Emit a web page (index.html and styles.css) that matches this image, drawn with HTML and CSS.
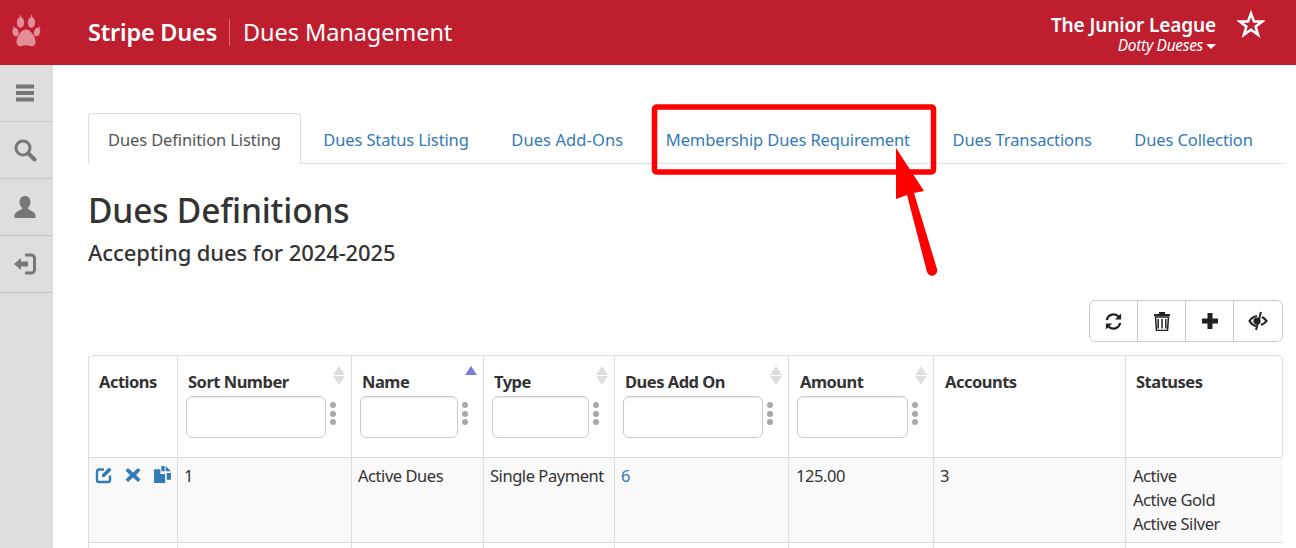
FILE: index.html
```html
<!DOCTYPE html>
<html lang="en">
<head>
<meta charset="utf-8">
<title>Dues Definitions</title>
<link rel="stylesheet" href="styles.css">
</head>
<body>
<header class="topbar">
  <div class="logo-cell">
    <svg class="paw" viewBox="0 0 30 36" width="30" height="36"><g fill="#e38d99"><ellipse cx="8.500" cy="9.500" rx="3.600" ry="5.200"/><ellipse cx="19.500" cy="9.500" rx="3.600" ry="5.200"/><ellipse cx="3.500" cy="19" rx="3" ry="4.400" transform="rotate(-15 3.500 19)"/><ellipse cx="25" cy="19" rx="3" ry="4.400" transform="rotate(15 25 19)"/><path d="M14 16.500c5 0 9.500 7.500 9.500 12.500 0 4-3 5-5 4-2.800-1-6-1-8.800 0-2 1-5.200 0-5.200-4 0-5 4.500-12.500 9.500-12.500z"/><path d="M7.500 4.500l1-3.500 1 3.500zM18.500 4.500l1-3.500 1 3.500zM26.500 15l1-2.500 .5 2.500zM1 15l.5-2.500 1 2.500z"/></g></svg>
  </div>
  <div class="brand">Stripe Dues</div>
  <div class="module">Dues Management</div>
  <div class="account">
    <div class="org">The Junior League</div>
    <div class="user">Dotty Dueses<span class="caret"></span></div>
  </div>
  <svg class="star" viewBox="0 0 28 28" width="28" height="28"><path d="M14 3.500l3 8h8.300l-6.700 5.100 2.500 8.200-7.100-5-7.100 5 2.500-8.200-6.700-5.100h8.300z" fill="none" stroke="#fff" stroke-width="2.600"/></svg>
</header>
<div class="shell">
  <nav class="rail">
    <div class="rail-item"><svg viewBox="0 0 20 20" width="20" height="20"><path d="M1 1.500h18v4H1zM1 8h18v4H1zM1 14.500h18v4H1z" fill="#777"/></svg></div>
    <div class="rail-item"><svg viewBox="0 0 24 24" width="24" height="24"><circle cx="10" cy="10" r="7" fill="none" stroke="#777" stroke-width="3"/><path d="M15 15l6.500 6.500" stroke="#777" stroke-width="4" stroke-linecap="round"/></svg></div>
    <div class="rail-item"><svg viewBox="0 0 24 24" width="24" height="24"><path d="M12 1c3.500 0 5.500 2.800 5.500 6 0 2.600-1.300 4.800-2.800 6 0 2.500 7.800 2.800 7.800 7.500V23H1.500v-2.500C1.500 15.800 9.300 15.500 9.300 13 7.800 11.800 6.500 9.600 6.500 7c0-3.200 2-6 5.500-6z" fill="#777"/></svg></div>
    <div class="rail-item"><svg viewBox="0 0 24 24" width="24" height="24"><path d="M12 3h6.500A3 3 0 0 1 21.500 6v12a3 3 0 0 1-3 3H12" fill="none" stroke="#777" stroke-width="3"/><path d="M1 12l7-6v3.500h7v5H8V18z" fill="#777"/></svg></div>
  </nav>
  <main class="content">
    <ul class="tabs">
      <li class="tab tab-active">Dues Definition Listing</li>
      <li class="tab"><a href="#">Dues Status Listing</a></li>
      <li class="tab"><a class="wide" href="#">Dues Add-Ons</a></li>
      <li class="tab"><a href="#">Membership Dues Requirement</a></li>
      <li class="tab"><a href="#">Dues Transactions</a></li>
      <li class="tab"><a href="#">Dues Collection</a></li>
    </ul>
    <h1 class="title">Dues Definitions</h1>
    <h2 class="subtitle">Accepting dues for 2024-2025</h2>
    <div class="toolbar">
      <div class="btn-group">
        <button class="tool" type="button" aria-label="Refresh"><svg viewBox="0 0 20 20" width="19" height="19"><path d="M3 8.500A7.200 7.200 0 0 1 15.500 5M17 11.500A7.200 7.200 0 0 1 4.500 15" fill="none" stroke="#222" stroke-width="2.400"/><path d="M18 1.500V8h-6.500zM2 18.500V12h6.500z" fill="#222"/></svg></button>
        <button class="tool" type="button" aria-label="Delete"><svg viewBox="0 0 18 20" width="18" height="20"><path d="M6 1h6v2h5v2H1V3h5z" fill="#222"/><path d="M2.500 6h13l-1 13.500h-11zM5.200 8v9.500M9 8v9.500M12.800 8v9.500" fill="none" stroke="#222" stroke-width="1.500"/></svg></button>
        <button class="tool" type="button" aria-label="Add"><svg viewBox="0 0 18 18" width="18" height="18"><path d="M6.500 1h5v5.500H17v5h-5.500V17h-5v-5.500H1v-5h5.500z" fill="#222"/></svg></button>
        <button class="tool" type="button" aria-label="Toggle columns"><svg viewBox="0 0 20 20" width="20" height="20"><path d="M9 5C5.500 5.500 3 7.500 1.500 10 3 12.500 5.500 14.500 8 15" fill="none" stroke="#222" stroke-width="2.200"/><circle cx="9" cy="10" r="3.600" fill="#222"/><path d="M13 1L8 19" stroke="#222" stroke-width="2"/><path d="M14 6c2 1 3.500 2.500 4.500 4-1 1.500-3 3-5.500 4" fill="none" stroke="#222" stroke-width="2.200"/></svg></button>
      </div>
    </div>
    <div class="table-wrap">
      <table class="grid">
        <colgroup>
          <col class="c-actions"><col class="c-sort"><col class="c-name"><col class="c-type"><col class="c-addon"><col class="c-amount"><col class="c-accounts"><col class="c-statuses">
        </colgroup>
        <thead>
          <tr>
            <th class="plain">Actions</th>
            <th><div class="th-label">Sort Number</div><span class="sort"><i class="up"></i><i class="down"></i></span><div class="filter"><input class="box box-sort" type="text" aria-label="Sort Number filter"><span class="dots"><i></i><i></i><i></i></span></div></th>
            <th><div class="th-label">Name</div><span class="sort"><i class="up on"></i></span><div class="filter"><input class="box box-name" type="text" aria-label="Name filter"><span class="dots"><i></i><i></i><i></i></span></div></th>
            <th><div class="th-label">Type</div><span class="sort"><i class="up"></i><i class="down"></i></span><div class="filter"><input class="box box-type" type="text" aria-label="Type filter"><span class="dots"><i></i><i></i><i></i></span></div></th>
            <th><div class="th-label">Dues Add On</div><span class="sort"><i class="up"></i><i class="down"></i></span><div class="filter"><input class="box box-addon" type="text" aria-label="Dues Add On filter"><span class="dots"><i></i><i></i><i></i></span></div></th>
            <th><div class="th-label th-amount">Amount</div><span class="sort"><i class="up"></i><i class="down"></i></span><div class="filter"><input class="box box-amount" type="text" aria-label="Amount filter"><span class="dots"><i></i><i></i><i></i></span></div></th>
            <th class="plain-wide">Accounts</th>
            <th class="plain-last">Statuses</th>
          </tr>
        </thead>
        <tbody>
          <tr class="row-main">
            <td class="acts">
              <svg class="ic-edit" viewBox="0 0 18 18" width="18" height="18"><path d="M9 3.500H4A2 2 0 0 0 2 5.500v8.500a2 2 0 0 0 2 2h9a2 2 0 0 0 2-2V9.500" fill="none" stroke="#337ab7" stroke-width="2.400"/><path d="M7 8.500L14 1.500l2.500 2.500-7 7H7z" fill="#337ab7"/></svg>
              <svg class="ic-del" viewBox="0 0 16 16" width="16" height="16"><path d="M3 1l5 4.500L13 1l2.500 2.500L11 8l4.500 4.500L13 15l-5-4.500L3 15 .5 12.500 5 8 .5 3.500z" fill="#337ab7"/></svg>
              <svg class="ic-copy" viewBox="0 0 18 18" width="19" height="19"><path d="M1 4h6v4.500h4.500V17H1z" fill="#337ab7"/><path d="M8 1h3v5H8zM12 1l5 5h-5zM13 7.500h4V14h-4z" fill="#337ab7"/></svg>
            </td>
            <td>1</td>
            <td>Active Dues</td>
            <td>Single Payment</td>
            <td><a href="#">6</a></td>
            <td class="td-amount">125.00</td>
            <td>3</td>
            <td class="td-last">Active<br>Active Gold<br>Active Silver</td>
          </tr>
          <tr class="row-next"><td></td><td></td><td></td><td></td><td></td><td></td><td></td><td></td></tr>
        </tbody>
      </table>
    </div>
  </main>
</div>
<svg class="annotation" viewBox="0 0 1296 548" width="1296" height="548">
  <rect x="654.500" y="107" width="279" height="65" rx="2" fill="none" stroke="#fe0000" stroke-width="5.500"/>
  <path d="M896 148V199L907 195 927 272a5 5 0 0 0 10-3L914 193 924 191z" fill="#fe0000"/>
</svg>
</body>
</html>
```
FILE: styles.css
```css
* { box-sizing: border-box; }
html, body { margin: 0; padding: 0; }
body {
  width: 1296px;
  height: 548px;
  overflow: hidden;
  background: #fff;
  font-family: "Noto Sans", "Open Sans", sans-serif;
  font-size: 15px;
  color: #333;
}
a { color: #337ab7; text-decoration: none; }

.topbar {
  height: 65px;
  background: #bf1e2e;
  color: #fff;
  display: flex;
  align-items: center;
}
.logo-cell { width: 53px; display: flex; justify-content: center; }
.paw { display: block; margin-top: -3px; }
.brand {
  margin-left: 35px;
  padding-right: 12px;
  font-size: 23.500px;
  font-weight: 600;
  letter-spacing: -0.22px;
  border-right: 1px solid #d9717c;
  line-height: 27px;
}
.module { margin-left: 13px; font-size: 23.500px; letter-spacing: -0.08px; line-height: 27px; }
.account { margin-left: auto; text-align: right; margin-top: 1px; }
.org { font-size: 19px; font-weight: 600; letter-spacing: -0.12px; line-height: 24px; }
.user { font-size: 15.500px; font-style: italic; letter-spacing: -0.3px; line-height: 17px; }
.caret {
  display: inline-block;
  margin-left: 3px;
  vertical-align: 2px;
  border-top: 5px solid #fff;
  border-left: 5px solid transparent;
  border-right: 5px solid transparent;
}
.star { margin: -17px 31px 0 21px; }

.shell { display: flex; height: 483px; }
.rail { width: 53px; background: #dedede; flex: none; }
.rail-item {
  height: 57px;
  padding-right: 3px;
  border-bottom: 1px solid #c9c9c9;
  display: flex;
  align-items: center;
  justify-content: center;
}

.content { flex: 1; min-width: 0; padding: 48px 13px 0 35px; }
.tabs {
  list-style: none;
  margin: 0;
  padding: 0;
  height: 51px;
  display: flex;
  border-bottom: 1px solid #ddd;
  font-size: 16.500px;
  letter-spacing: -0.12px;
}
.tab { height: 51px; padding: 15px 20px 0; line-height: 24px; margin-right: 2.500px; white-space: nowrap; }
.tab a { color: #337ab7; }
.tab a.wide { letter-spacing: 0.1px; }
.tab-active {
  color: #555;
  background: #fff;
  border: 1px solid #ddd;
  border-bottom-color: #fff;
  border-radius: 4px 4px 0 0;
  padding: 14px 19px 0;
}
.title { margin: 23px 0 0; font-size: 33.500px; font-weight: 500; line-height: 46px; letter-spacing: -0.17px; color: #333; }
.subtitle { margin: 4px 0 0; font-size: 22px; font-weight: 500; line-height: 30px; letter-spacing: -0.1px; color: #333; }

.toolbar { margin-top: 33px; display: flex; justify-content: flex-end; }
.btn-group { display: flex; border: 1px solid #ccc; border-radius: 6px; height: 42px; background: #fff; }
.tool {
  width: 48px;
  height: 40px;
  background: none;
  border: 0;
  border-right: 1px solid #ccc;
  padding: 0;
  display: flex;
  align-items: center;
  justify-content: center;
}
.tool:last-child { border-right: 0; }

.table-wrap { margin-top: 13px; border: 1px solid #ddd; border-radius: 5px 5px 0 0; border-bottom: 0; }
.grid { width: 1194px; border-collapse: collapse; table-layout: fixed; margin: 0 0 0 -1px; }
.c-actions { width: 89px; }
.c-sort { width: 174px; }
.c-name { width: 132px; }
.c-type { width: 131px; }
.c-addon { width: 174px; }
.c-amount { width: 145px; }
.c-accounts { width: 192px; }
.c-statuses { width: 157px; }
.grid th, .grid td { border: 1px solid #ddd; vertical-align: top; text-align: left; }
.grid tr:first-child th { border-top: 0; }
.grid th:last-child, .grid td:last-child { border-right: 0; }
.grid th {
  height: 101px;
  position: relative;
  padding: 14px 8px 0;
  font-size: 16.500px;
  font-weight: 700;
  letter-spacing: -0.5px;
  line-height: 24px;
  color: #333;
}
.grid th.plain { padding-left: 10px; }
.grid th.plain-wide { padding-left: 11px; }
.grid th.plain-last { padding-left: 10px; }
.th-label { height: 26px; padding-left: 2px; }
.th-amount { padding-left: 3px; }
.filter { display: flex; align-items: flex-start; }
.box {
  display: block;
  height: 42px;
  border: 1px solid #ccc;
  border-radius: 6px;
  background: #fff;
  padding: 0;
  box-shadow: inset 0 1px 1px rgba(0,0,0,.075);
}
.box-sort { width: 140px; }
.box-name { width: 98px; }
.box-type { width: 97px; }
.box-addon { width: 140px; }
.box-amount { width: 111px; }
.dots { display: flex; flex-direction: column; gap: 2.500px; margin: 6px 0 0 4px; }
.dots i { display: block; width: 6px; height: 6px; border-radius: 50%; background: #a8a8a8; }
.sort { position: absolute; right: 6px; top: 10px; display: flex; flex-direction: column; gap: 1px; }
.sort .up, .sort .down { display: block; width: 0; height: 0; border-left: 6px solid transparent; border-right: 6px solid transparent; }
.sort .up { border-bottom: 9px solid #dedede; }
.sort .down { border-top: 9px solid #dedede; }
.sort .up.on { border-bottom-color: #7a7ade; }

.grid td { padding: 6px 6px 0; font-size: 16.500px; letter-spacing: -0.45px; line-height: 24px; color: #333; }
.grid td.td-amount { padding-left: 7px; }
.grid td.td-last { padding-left: 7px; }
.row-main td { height: 85px; background: #f9f9f9; }
.grid .row-main .acts { padding: 8px 0 0 6px; white-space: nowrap; font-size: 0; }
.acts svg { vertical-align: top; }
.ic-edit { margin-right: 12px; }
.ic-del { margin: 1px 12px 0 0; }
.ic-copy { margin-top: -1px; }
.row-next td { height: 30px; background: #fff; }

.annotation { position: absolute; left: 0; top: 0; pointer-events: none; }
```
